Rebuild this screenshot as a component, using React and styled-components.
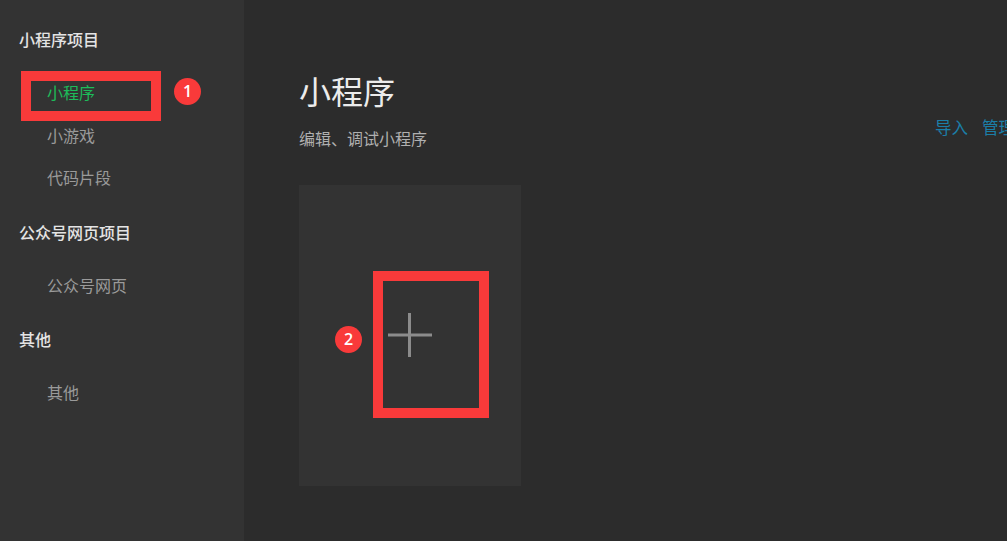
import React from 'react';
import styled, { createGlobalStyle } from 'styled-components';

const GlobalStyle = createGlobalStyle`
  html, body {
    margin: 0;
    padding: 0;
    background: #2c2c2c;
  }
  body {
    font-family: "Noto Sans CJK SC", "Noto Sans", "Liberation Sans", sans-serif;
  }
`;

const Page = styled.div`
  display: flex;
  width: 1007px;
  height: 541px;
  overflow: hidden;
`;

const Sidebar = styled.aside`
  width: 244px;
  flex-shrink: 0;
  background: #333333;
  padding-top: 18px;
  box-sizing: border-box;
`;

const Group = styled.div`
  margin-bottom: 12px;
`;

const GroupTitle = styled.div`
  height: 43px;
  line-height: 43px;
  margin-bottom: 10px;
  padding-left: 19px;
  font-size: 16px;
  font-weight: 500;
  color: #e4e4e4;
`;

const Item = styled.div`
  position: relative;
  height: 42.5px;
  line-height: 42.5px;
  padding-left: 47px;
  font-size: 16px;
  color: ${(p) => (p.$active ? '#1dbb5a' : '#9a9a9a')};
`;

const Mark = styled.div`
  position: absolute;
  box-sizing: border-box;
  border: 10px solid #f93a3a;
  left: ${(p) => p.$left}px;
  top: ${(p) => p.$top}px;
  width: ${(p) => p.$w}px;
  height: ${(p) => p.$h}px;
  pointer-events: none;
`;

const Badge = styled.div`
  position: absolute;
  left: ${(p) => p.$left}px;
  top: ${(p) => p.$top}px;
  width: 27px;
  height: 27px;
  border-radius: 50%;
  background: #f93a3a;
  color: #ffffff;
  font-family: "Open Sans", "Liberation Sans", sans-serif;
  font-size: 16px;
  font-weight: 600;
  line-height: 27px;
  text-align: center;
`;

const Main = styled.main`
  flex: 1;
  padding: 70px 0 0 55px;
  overflow: hidden;
`;

const HeaderRow = styled.div`
  display: flex;
  justify-content: space-between;
  align-items: flex-end;
  margin-right: -8px;
`;

const Title = styled.h1`
  margin: 0;
  height: 40px;
  line-height: 40px;
  font-size: 32px;
  font-weight: 400;
  color: #ececec;
`;

const Subtitle = styled.p`
  margin: 16px 0 0;
  line-height: 24px;
  font-size: 16px;
  color: #b0b0b0;
`;

const Actions = styled.div`
  display: flex;
  gap: 14px;
  margin-bottom: 11px;
  white-space: nowrap;
`;

const ActionLink = styled.span`
  font-size: 16.5px;
  line-height: 24px;
  color: #1b7ea8;
`;

const Card = styled.div`
  position: relative;
  margin-top: 35px;
  width: 222px;
  height: 301px;
  background: #333333;
  display: flex;
  align-items: center;
  justify-content: center;
`;

function PlusIcon() {
  return (
    <svg width="44" height="44" viewBox="0 0 44 44" style={{ marginTop: '-1px' }}>
      <line x1="0" y1="22" x2="44" y2="22" stroke="#8c8c8c" strokeWidth="3" />
      <line x1="21.5" y1="0" x2="21.5" y2="44" stroke="#8c8c8c" strokeWidth="3" />
    </svg>
  );
}

const groups = [
  { title: '小程序项目', items: ['小程序', '小游戏', '代码片段'] },
  { title: '公众号网页项目', items: ['公众号网页'] },
  { title: '其他', items: ['其他'] },
];

export default function App() {
  return (
    <>
      <GlobalStyle />
      <Page>
        <Sidebar>
          {groups.map((g, gi) => (
            <Group key={g.title}>
              <GroupTitle>{g.title}</GroupTitle>
              {g.items.map((it, ii) => {
                const active = gi === 0 && ii === 0;
                return (
                  <Item key={it} $active={active}>
                    {it}
                    {active && (
                      <>
                        <Mark $left={21} $top={0} $w={140} $h={50} />
                        <Badge $left={174} $top={6.5}>1</Badge>
                      </>
                    )}
                  </Item>
                );
              })}
            </Group>
          ))}
        </Sidebar>
        <Main>
          <HeaderRow>
            <div>
              <Title>小程序</Title>
              <Subtitle>编辑、调试小程序</Subtitle>
            </div>
            <Actions>
              <ActionLink>导入</ActionLink>
              <ActionLink>管理</ActionLink>
            </Actions>
          </HeaderRow>
          <Card>
            <PlusIcon />
            <Mark $left={74} $top={86} $w={116} $h={147} />
            <Badge $left={36} $top={141}>2</Badge>
          </Card>
        </Main>
      </Page>
    </>
  );
}
